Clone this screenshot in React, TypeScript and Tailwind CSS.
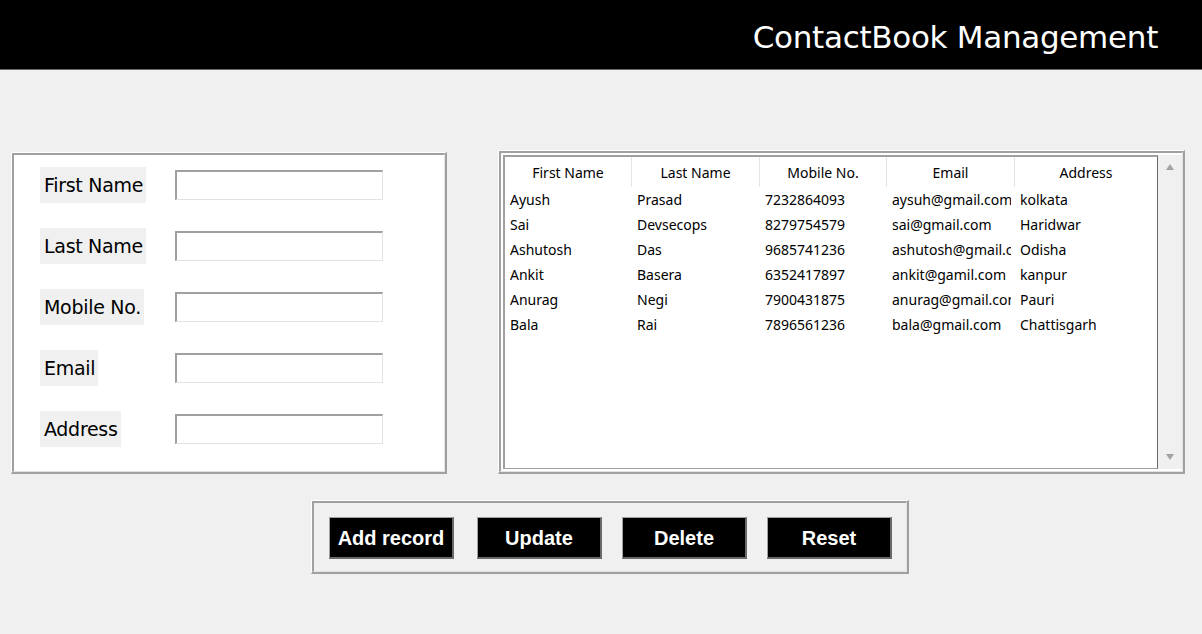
import React from 'react';

const contacts = [
  { first: 'Ayush', last: 'Prasad', mobile: '7232864093', email: 'aysuh@gmail.com', address: 'kolkata' },
  { first: 'Sai', last: 'Devsecops', mobile: '8279754579', email: 'sai@gmail.com', address: 'Haridwar' },
  { first: 'Ashutosh', last: 'Das', mobile: '9685741236', email: 'ashutosh@gmail.com', address: 'Odisha' },
  { first: 'Ankit', last: 'Basera', mobile: '6352417897', email: 'ankit@gamil.com', address: 'kanpur' },
  { first: 'Anurag', last: 'Negi', mobile: '7900431875', email: 'anurag@gmail.com', address: 'Pauri' },
  { first: 'Bala', last: 'Rai', mobile: '7896561236', email: 'bala@gmail.com', address: 'Chattisgarh' },
];

const fields = ['First Name', 'Last Name', 'Mobile No.', 'Email', 'Address'];

const labelFont = { fontFamily: '"DejaVu Sans", "Comic Sans MS", sans-serif' };

// tk "ridge" style frame
function Ridge({ className, children }: { className?: string; children: React.ReactNode }) {
  return (
    <div className={`border-t border-l border-t-white border-l-white border-r-2 border-b-2 border-r-[#a0a0a0] border-b-[#a0a0a0] ${className ?? ''}`}>
      <div className="h-full border-t-2 border-l-2 border-t-[#a0a0a0] border-l-[#a0a0a0] border-r border-b border-r-[#e3e3e3] border-b-[#e3e3e3]">
        {children}
      </div>
    </div>
  );
}

export default function App() {
  const cols = ['w-[127px]', 'w-[128px]', 'w-[127px]', 'w-[128px]', 'flex-1'];
  return (
    <div className="w-[1202px] h-[634px] bg-[#f0f0f0] overflow-hidden">
      {/* header */}
      <div className="h-[70px] bg-black border-b border-[#6a6a6a] flex items-center justify-end pr-[44px] pt-[6px]">
        <h1 className="text-white text-[31px] tracking-[-0.3px] leading-none" style={labelFont}>
          ContactBook Management
        </h1>
      </div>

      <div className="flex items-end gap-[51px] pl-[11px] pt-[80px]">
        {/* form panel */}
        <Ridge className="w-[436px] h-[322px]">
          <div className="h-full bg-white pl-[26px] pt-[12px] flex flex-col gap-[25px]">
            {fields.map((f) => (
              <div key={f} className="flex items-center h-[36px]">
                <div className="w-[135px]">
                  <span
                    className="inline-flex items-center h-[36px] bg-[#f0f0f0] pl-[4px] pr-[3px] text-[19px] leading-none tracking-[-0.3px] text-black"
                    style={labelFont}
                  >
                    {f}
                  </span>
                </div>
                <div className="w-[208px] h-[30px] bg-white border-t-2 border-l-2 border-t-[#a0a0a0] border-l-[#a0a0a0] border-r border-b border-r-[#e3e3e3] border-b-[#e3e3e3]" />
              </div>
            ))}
          </div>
        </Ridge>

        {/* table panel */}
        <Ridge className="w-[687px] h-[324px]">
          <div className="h-full bg-white flex p-[2px] pr-0">
            <div
              className="flex-1 border-t-2 border-l-2 border-t-[#a0a0a0] border-l-[#a0a0a0] border-r border-b border-r-[#696969] border-b-[#a0a0a0] bg-white"
              style={{ fontFamily: '"Noto Sans", "Open Sans", sans-serif' }}
            >
              <div className="flex h-[30px] text-[14px] text-black">
                {['First Name', 'Last Name', 'Mobile No.', 'Email', 'Address'].map((h, i) => (
                  <div
                    key={h}
                    className={`${cols[i]} flex items-center justify-center ${i < 4 ? 'border-r border-[#e5e5e5]' : ''}`}
                  >
                    {h}
                  </div>
                ))}
              </div>
              {contacts.map((c) => (
                <div key={c.first} className="flex h-[25px] items-center text-[14px] text-black">
                  {[c.first, c.last, c.mobile, c.email, c.address].map((v, i) => (
                    <div key={i} className={`${cols[i]} pl-[5px] pr-[4px]`}>
                      <div className="whitespace-nowrap overflow-hidden">{v}</div>
                    </div>
                  ))}
                </div>
              ))}
            </div>
            {/* scrollbar */}
            <div className="w-[24px] bg-[#f0f0f0] flex flex-col items-center justify-between py-[8px]">
              <svg width="10" height="8" viewBox="0 0 10 8">
                <polygon points="5,1 9,7 1,7" fill="#a3a3a3" />
              </svg>
              <svg width="10" height="8" viewBox="0 0 10 8">
                <polygon points="1,1 9,1 5,7" fill="#a3a3a3" />
              </svg>
            </div>
          </div>
        </Ridge>
      </div>

      {/* buttons */}
      <div className="pl-[311px] pt-[26px]">
        <Ridge className="w-[598px] h-[74px]">
          <div className="h-full flex items-center pl-[15px] pt-[2px]">
            {['Add record', 'Update', 'Delete', 'Reset'].map((b, i) => (
              <button
                key={b}
                className={`${i === 0 ? '' : i === 1 ? 'ml-[23px]' : 'ml-[20px]'} w-[125px] h-[42px] bg-black text-white text-[20px] font-bold border-t border-l border-t-[#a0a0a0] border-l-[#a0a0a0] border-r-2 border-b-2 border-r-[#696969] border-b-[#696969]`}
                style={{ fontFamily: '"Liberation Sans", Arial, sans-serif' }}
              >
                {b}
              </button>
            ))}
          </div>
        </Ridge>
      </div>
    </div>
  );
}
